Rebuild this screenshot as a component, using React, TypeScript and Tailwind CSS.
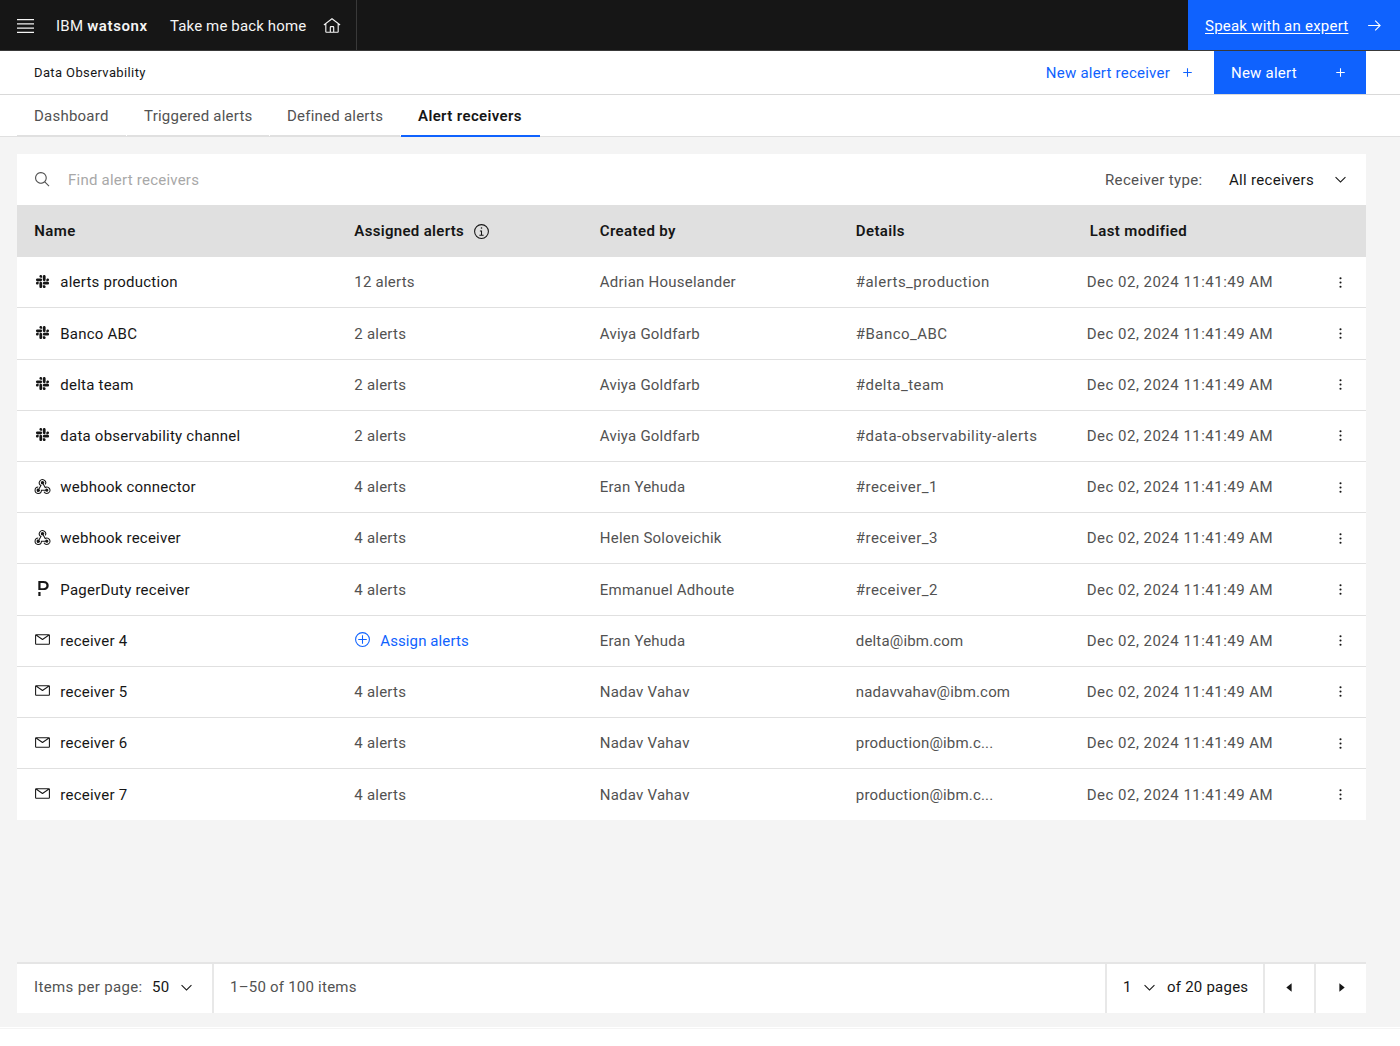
import type { ReactNode } from "react";
import { FaSlack } from "react-icons/fa";
import { SiPagerduty } from "react-icons/si";

const ICONS = {
  home: "M16.6123,2.2138a1.01,1.01,0,0,0-1.2427,0L1,13.4194l1.2427,1.5717L4,13.621V26a2.0041,2.0041,0,0,0,2,2H26a2.0037,2.0037,0,0,0,2-2V13.63L29.7573,15,31,13.4282ZM18,26H14V18h4Zm2,0V18a2.0023,2.0023,0,0,0-2-2H14a2.002,2.002,0,0,0-2,2v8H6V12.0615l10-7.79,10,7.8005V26Z",
  arrowRight: "M18 6L16.57 7.393 24.15 15 4 15 4 17 24.15 17 16.57 24.573 18 26 28 16 18 6z",
  add: "M17 15V8H15V15H8V17H15V24H17V17H24V15z",
  addCircle: "M16,4A12,12,0,1,1,4,16,12,12,0,0,1,16,4m0-2A14,14,0,1,0,30,16,14,14,0,0,0,16,2ZM24 15H17V8H15V15H8V17H15V24H17V17H24z",
  search: "M29,27.5859l-7.5521-7.5521a11.0177,11.0177,0,1,0-1.4141,1.4141L27.5859,29ZM4,13a9,9,0,1,1,9,9A9.01,9.01,0,0,1,4,13Z",
  chevronDown: "M16 22L6 12 7.4 10.6 16 19.2 24.6 10.6 26 12z",
  info: "M17 22V14H13V16H15V22H12V24H20V22zM16 8a1.5 1.5 0 1 0 1.5 1.5A1.5 1.5 0 0 0 16 8zM16,30A14,14,0,1,1,30,16,14,14,0,0,1,16,30ZM16,4A12,12,0,1,0,28,16,12,12,0,0,0,16,4Z",
  email: "M28,6H4A2,2,0,0,0,2,8V24a2,2,0,0,0,2,2H28a2,2,0,0,0,2-2V8A2,2,0,0,0,28,6ZM25.8,8,16,14.78,6.2,8ZM4,24V8.91l11.43,7.91a1,1,0,0,0,1.14,0L28,8.91V24Z",
  webhook: "M24,26a3,3,0,1,0-2.8164-4H13v1a5,5,0,1,1-5-5V16a7,7,0,1,0,6.9287,8h6.2549A2.9914,2.9914,0,0,0,24,26ZM24,16a7.024,7.024,0,0,0-2.57.4873l-3.1656-5.5395a3.0469,3.0469,0,1,0-1.7326.9985l4.1189,7.2085.8686-.4976a5.0006,5.0006,0,1,1-1.851,6.8418L17.937,26.501A7.0005,7.0005,0,1,0,24,16ZM8.532,20.0537a3.03,3.03,0,1,0,1.7326.9985C11.74,18.47,13.86,14.7607,13.89,14.708l.4976-.8682-.8677-.497a5,5,0,1,1,6.812-1.8438l1.7315,1.002a7.0008,7.0008,0,1,0-10.3462,2.0356c-.457.7427-1.1021,1.8716-2.0737,3.5728Z",
  dots: "M14 8a2 2 0 1 0 4 0 2 2 0 1 0-4 0zM14 16a2 2 0 1 0 4 0 2 2 0 1 0-4 0zM14 24a2 2 0 1 0 4 0 2 2 0 1 0-4 0z",
  caretLeft: "M20 24L10 16 20 8z",
  caretRight: "M12 8L22 16 12 24z",
};

function Icon({ name, className = "size-[17px]" }: { name: keyof typeof ICONS; className?: string }) {
  return (
    <svg viewBox="0 0 32 32" fill="currentColor" className={`shrink-0 ${className}`}>
      <path d={ICONS[name]} />
    </svg>
  );
}

type Kind = "slack" | "webhook" | "pagerduty" | "email";

type Receiver = {
  kind: Kind;
  name: string;
  alerts: number;
  createdBy: string;
  details: string;
};

const RECEIVERS: Receiver[] = [
  { kind: "slack", name: "alerts production", alerts: 12, createdBy: "Adrian Houselander", details: "#alerts_production" },
  { kind: "slack", name: "Banco ABC", alerts: 2, createdBy: "Aviya Goldfarb", details: "#Banco_ABC" },
  { kind: "slack", name: "delta team", alerts: 2, createdBy: "Aviya Goldfarb", details: "#delta_team" },
  { kind: "slack", name: "data observability channel", alerts: 2, createdBy: "Aviya Goldfarb", details: "#data-observability-alerts" },
  { kind: "webhook", name: "webhook connector", alerts: 4, createdBy: "Eran Yehuda", details: "#receiver_1" },
  { kind: "webhook", name: "webhook receiver", alerts: 4, createdBy: "Helen Soloveichik", details: "#receiver_3" },
  { kind: "pagerduty", name: "PagerDuty receiver", alerts: 4, createdBy: "Emmanuel Adhoute", details: "#receiver_2" },
  { kind: "email", name: "receiver 4", alerts: 0, createdBy: "Eran Yehuda", details: "delta@ibm.com" },
  { kind: "email", name: "receiver 5", alerts: 4, createdBy: "Nadav Vahav", details: "nadavvahav@ibm.com" },
  { kind: "email", name: "receiver 6", alerts: 4, createdBy: "Nadav Vahav", details: "production@ibm.c..." },
  { kind: "email", name: "receiver 7", alerts: 4, createdBy: "Nadav Vahav", details: "production@ibm.c..." },
];

const TABS = [
  { label: "Dashboard", className: "w-[109px]" },
  { label: "Triggered alerts", className: "w-[142px]" },
  { label: "Defined alerts", className: "w-[130px]" },
];

const COLUMNS = "grid grid-cols-[320px_245.5px_256px_231px_1fr_51px] items-center pl-[17.3px]";

function KindIcon({ kind }: { kind: Kind }) {
  if (kind === "slack") return <FaSlack className="size-[15px]" />;
  if (kind === "pagerduty") return <SiPagerduty className="ml-px size-[15px]" />;
  return <Icon name={kind} />;
}

function Header() {
  return (
    <header className="flex h-[51px] border-b border-[#393939] bg-[#161616] text-[#f4f4f4]">
      <div className="flex w-[357px] items-center border-r border-[#393939] pt-px pl-[17px]">
        <svg viewBox="0 0 17 14" fill="currentColor" className="h-3.5 w-[17px]">
          <path d="M0 0h17v1.2H0zM0 4.2h17v1.2H0zM0 8.5h17v1.2H0zM0 12.7h17v1.2H0z" />
        </svg>
        <span className="ml-[22px] w-[114px]">
          IBM <b className="font-semibold tracking-[0.6px]">watsonx</b>
        </span>
        <span className="w-[153px] tracking-[0.14px]">Take me back home</span>
        <Icon name="home" className="size-[18px]" />
      </div>
      <a className="ml-auto flex w-[212px] items-center justify-between bg-[#0f62fe] pt-px pr-[17px] pl-[17px] text-white">
        <span className="underline underline-offset-2">Speak with an expert</span>
        <Icon name="arrowRight" />
      </a>
    </header>
  );
}

function Toolbar() {
  return (
    <div className="flex h-11 items-center border-b border-[#d9d9d9] bg-white pr-[34px] pl-[34px]">
      <h1 className="pt-px text-[13px] tracking-[0.38px]">Data Observability</h1>
      <button className="mr-[18px] ml-auto flex items-center gap-[9px] text-[#0f62fe]">
        New alert receiver
        <Icon name="add" />
      </button>
      <button className="flex h-[43px] w-[152px] items-center justify-between bg-[#0f62fe] px-[17px] text-white">
        New alert
        <Icon name="add" />
      </button>
    </div>
  );
}

function Tabs() {
  return (
    <nav className="flex h-[42px] gap-px border-b border-[#e0e0e0] bg-white pl-[17px] text-[#525252]">
      {TABS.map((tab) => (
        <a key={tab.label} className={`flex h-[41px] items-center border-b border-[#e0e0e0] pt-0.5 pl-[17px] ${tab.className}`}>
          {tab.label}
        </a>
      ))}
      <a className="flex h-[42px] w-[139px] items-center border-b-2 border-[#0f62fe] pt-0.5 pl-[17px] font-semibold tracking-[0.38px] text-[#161616]">
        Alert receivers
      </a>
    </nav>
  );
}

function Row({ receiver }: { receiver: Receiver }) {
  const isChannel = receiver.details.startsWith("#");

  return (
    <div className={`h-[51.2px] border-b border-[#e0e0e0] last:border-b-0 ${COLUMNS}`}>
      <div className="flex items-center gap-[9px] text-[#161616]">
        <span className="-mt-0.5 flex w-[17px] justify-center">
          <KindIcon kind={receiver.kind} />
        </span>
        {receiver.name}
      </div>
      {receiver.alerts > 0 ? (
        <span>{receiver.alerts} alerts</span>
      ) : (
        <a className="flex items-center gap-[9px] tracking-[0.1px] text-[#0f62fe]">
          <Icon name="addCircle" className="-mt-0.5 size-[17px]" />
          Assign alerts
        </a>
      )}
      <span>{receiver.createdBy}</span>
      <span className={isChannel ? "tracking-[0.46px]" : "tracking-[0.17px]"}>{receiver.details}</span>
      <span className="tracking-[0.48px]">Dec 02, 2024 11:41:49 AM</span>
      <Icon name="dots" className="ml-[17px] size-[17px] text-[#161616]" />
    </div>
  );
}

function PagerCell({ className, children }: { className: string; children?: ReactNode }) {
  return <div className={`flex items-center border-r-2 border-[#e8e8e8] pb-[3px] last:border-r-0 ${className}`}>{children}</div>;
}

function Pagination() {
  return (
    <footer className="flex h-[51px] border-t-2 border-[#e5e5e5] bg-white text-[#161616]">
      <PagerCell className="w-[197px] pl-[17px]">
        <span className="w-[118px] tracking-[0.35px] text-[#525252]">Items per page:</span>
        <span className="w-[26px]">50</span>
        <Icon name="chevronDown" />
      </PagerCell>
      <PagerCell className="flex-1 pl-4 text-[#525252]">1–50 of 100 items</PagerCell>
      <PagerCell className="w-[158px] pl-4">
        <span className="w-[18px]">1</span>
        <Icon name="chevronDown" />
        <span className="ml-[9px]">of 20 pages</span>
      </PagerCell>
      <PagerCell className="w-[51px] justify-center">
        <Icon name="caretLeft" />
      </PagerCell>
      <PagerCell className="w-[50px] justify-center">
        <Icon name="caretRight" />
      </PagerCell>
    </footer>
  );
}

export default function App() {
  return (
    <div className="h-[1046px] bg-white font-[Roboto,sans-serif] text-[15px] leading-5 tracking-[0.23px] whitespace-nowrap text-[#161616]">
      <Header />
      <Toolbar />
      <Tabs />
      <main className="flex h-[890px] flex-col bg-[#f4f4f4] pt-[17px] pr-[34px] pb-3.5 pl-[17px]">
        <section className="bg-white text-[#525252]">
          <div className="flex h-[51.3px] items-center pr-[17px] pl-[17px]">
            <Icon name="search" />
            <span className="ml-[17px] text-[#a8a8a8]">Find alert receivers</span>
            <span className="ml-auto w-[124px] tracking-[0.35px]">Receiver type:</span>
            <span className="w-[103px] tracking-[0.3px] text-[#161616]">All receivers</span>
            <Icon name="chevronDown" className="size-[17px] text-[#161616]" />
          </div>
          <div className={`h-[52px] bg-[#e0e0e0] font-semibold tracking-[0.38px] text-[#161616] ${COLUMNS}`}>
            <span>Name</span>
            <span className="flex items-center gap-[9px] tracking-[0.32px]">
              Assigned alerts
              <Icon name="info" />
            </span>
            <span>Created by</span>
            <span>Details</span>
            <span className="pl-[3px]">Last modified</span>
          </div>
          <div>
            {RECEIVERS.map((receiver) => (
              <Row key={receiver.name} receiver={receiver} />
            ))}
          </div>
        </section>
        <div className="mt-auto">
          <Pagination />
        </div>
      </main>
      <div className="mt-px h-px bg-[#f4f4f4]" />
    </div>
  );
}
